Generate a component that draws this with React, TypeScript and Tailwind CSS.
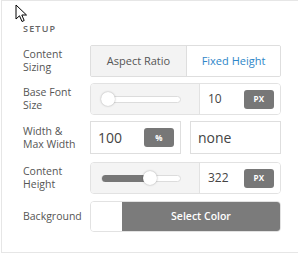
import React from "react";

function PxBadge({ label }: { label: string }) {
  return (
    <div className="w-[30px] h-[19px] rounded-[3px] bg-[#777777] flex items-center justify-center text-white text-[8px] font-bold tracking-[0.2px]">
      {label}
    </div>
  );
}

function SliderRow({ value, pos }: { value: string; pos: number }) {
  return (
    <div className="flex h-[32px] rounded-[4px] border border-[#e2e2e2] overflow-hidden">
      <div className="w-[109px] bg-[#f4f4f4] border-r border-[#e2e2e2] flex items-center pl-[10px]">
        <div className="relative w-[80px] h-[7px] rounded-full bg-white border border-[#dcdcdc]">
          {pos > 0 && (
            <div
              className="absolute left-0 top-[-1px] h-[7px] rounded-l-full bg-[#777777]"
              style={{ width: pos }}
            />
          )}
          <div
            className="absolute top-1/2 -translate-y-1/2 w-[14px] h-[14px] rounded-full bg-white shadow-[0_0_2px_rgba(0,0,0,0.35)]"
            style={{ left: pos - 7 < -1 ? -1 : pos - 7 }}
          />
        </div>
      </div>
      <div className="flex-1 flex items-center justify-between pl-[8px] pr-[6px] bg-white">
        <span className="text-[12px] text-[#444]">{value}</span>
        <PxBadge label="PX" />
      </div>
    </div>
  );
}

function Row({
  lines,
  className,
  children,
}: {
  lines: string[];
  className?: string;
  children: React.ReactNode;
}) {
  return (
    <div className={"flex " + (className ?? "")}>
      <div className="w-[67px] shrink-0 flex flex-col justify-center text-[10.5px] text-[#555]">
        {lines.map((l) => (
          <div key={l} className="h-[13px] leading-[13px] whitespace-nowrap">
            {l}
          </div>
        ))}
      </div>
      <div className="w-[191px] shrink-0">{children}</div>
    </div>
  );
}

export default function App() {
  return (
    <div className="relative w-[298px] h-[259px] bg-white font-['Open_Sans',sans-serif]">
      <div className="ml-[1px] h-[253px] border-l border-t border-b border-[#e6e6e6] pl-[21px] pr-[17px] pt-[22px]">
        <div className="text-[9px] leading-[12px] font-semibold tracking-[1.2px] text-[#666]">SETUP</div>
        <Row lines={["Content", "Sizing"]} className="mt-[10px]">
          <div className="flex h-[32px] border border-[#dedede] rounded-[2px] overflow-hidden">
            <div className="w-[96px] bg-[#f3f3f3] border-r border-[#dedede] flex items-center justify-center text-[11px] text-[#555]">
              Aspect Ratio
            </div>
            <div className="flex-1 bg-white flex items-center justify-center text-[11px] text-[#2e86c8]">
              Fixed Height
            </div>
          </div>
        </Row>

        <Row lines={["Base Font", "Size"]} className="mt-[6px]">
          <SliderRow value="10" pos={0} />
        </Row>

        <Row lines={["Width &", "Max Width"]} className="mt-[6px]">
          <div className="flex gap-[9px] h-[33px]">
            <div className="w-[91px] border border-[#dedede] flex items-center justify-between pl-[7px] pr-[6px]">
              <span className="text-[14px] text-[#444]">100</span>
              <PxBadge label="%" />
            </div>
            <div className="flex-1 border border-[#dedede] flex items-center pl-[7px]">
              <span className="text-[14px] text-[#444]">none</span>
            </div>
          </div>
        </Row>

        <Row lines={["Content", "Height"]} className="mt-[8px]">
          <SliderRow value="322" pos={48} />
        </Row>

        <Row lines={["Background"]} className="mt-[7px]">
          <div className="flex h-[31px] rounded-[4px] border border-[#e2e2e2] overflow-hidden">
            <div className="w-[31px] bg-white" />
            <div className="flex-1 bg-[#7b7b7b] flex items-center justify-center text-[10.5px] font-semibold text-white">
              Select Color
            </div>
          </div>
        </Row>
      </div>
      <svg
        className="absolute left-[15px] top-[4px]"
        width="14"
        height="19"
        viewBox="0 0 14 19"
      >
        <path
          d="M1 1 L1 15 L4.5 11.8 L7 17.5 L9.2 16.5 L6.8 11 L11.5 11 Z"
          fill="white"
          stroke="black"
          strokeWidth="1"
          strokeLinejoin="round"
        />
      </svg>
    </div>
  );
}
